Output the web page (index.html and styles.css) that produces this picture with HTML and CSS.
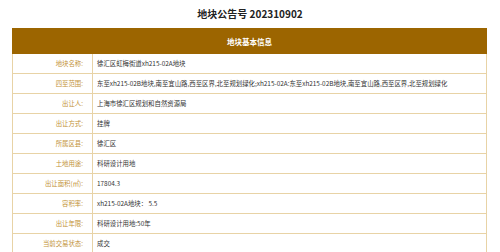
FILE: index.html
```html
<!DOCTYPE html>
<html lang="zh">
<head>
<meta charset="utf-8">
<link rel="stylesheet" href="styles.css">
</head>
<body>
<h1 class="title">地块公告号 202310902</h1>
<table class="info">
  <colgroup>
    <col class="col-label">
    <col class="col-value">
  </colgroup>
  <thead>
    <tr><th colspan="2" class="head">地块基本信息</th></tr>
  </thead>
  <tbody>
    <tr><td class="label">地块名称:</td><td class="value">徐汇区虹梅街道xh215-02A地块</td></tr>
    <tr><td class="label">四至范围:</td><td class="value">东至xh215-02B地块,南至宜山路,西至区界,北至规划绿化;xh215-02A:东至xh215-02B地块,南至宜山路,西至区界,北至规划绿化</td></tr>
    <tr><td class="label">出让人:</td><td class="value">上海市徐汇区规划和自然资源局</td></tr>
    <tr><td class="label">出让方式:</td><td class="value">挂牌</td></tr>
    <tr><td class="label">所属区县:</td><td class="value">徐汇区</td></tr>
    <tr><td class="label">土地用途:</td><td class="value">科研设计用地</td></tr>
    <tr><td class="label">出让面积(㎡):</td><td class="value">17804.3</td></tr>
    <tr><td class="label">容积率:</td><td class="value">xh215-02A地块： 5.5</td></tr>
    <tr><td class="label">出让年限:</td><td class="value">科研设计用地:50年</td></tr>
    <tr><td class="label">当前交易状态:</td><td class="value">成交</td></tr>
  </tbody>
</table>
</body>
</html>
```

FILE: styles.css
```css
html, body {
  margin: 0;
  padding: 0;
  background: #ffffff;
}
body {
  font-family: "Noto Sans CJK SC", "Noto Sans", sans-serif;
  width: 500px;
}
.title {
  margin: 0;
  height: 28px;
  line-height: 28px;
  font-size: 10px;
  font-weight: bold;
  color: #222;
  text-align: center;
}
.info {
  margin-left: 12px;
  width: 475px;
  border-collapse: collapse;
  table-layout: fixed;
}
.col-label {
  width: 80px;
}
.head {
  background: #9c6500;
  color: #ffffff;
  height: 24px;
  padding: 0;
  font-size: 7.5px;
  font-weight: bold;
  text-align: center;
  border: 1px solid #9c6500;
}
.info td {
  height: 19px;
  padding: 0;
  border: 1px solid #e8d3a6;
  font-size: 6.4px;
  white-space: nowrap;
  overflow: hidden;
}
.label {
  text-align: right;
  padding-right: 9px !important;
  color: #c39338;
}
.value {
  padding-left: 4px !important;
  color: #333;
}
```
